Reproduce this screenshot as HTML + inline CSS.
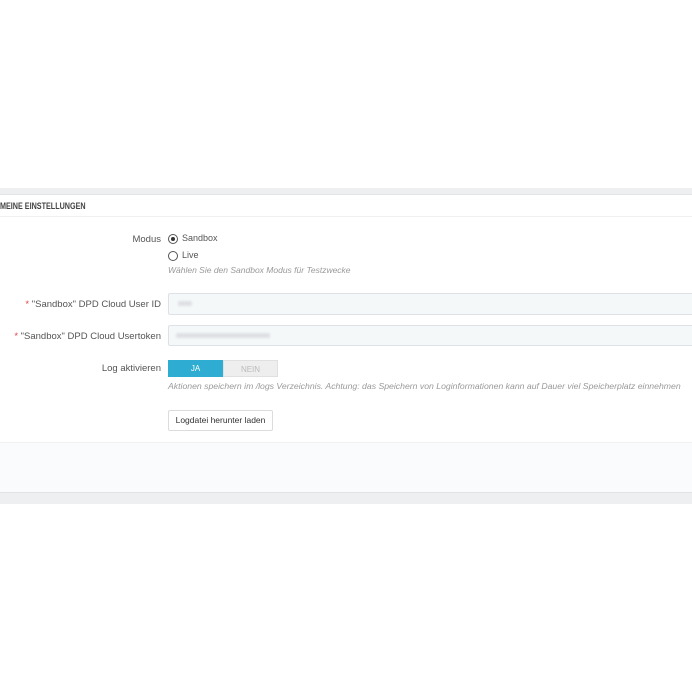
<!DOCTYPE html><html><head><style>
body{margin:0;width:692px;height:692px;background:#fff;font-family:"Liberation Sans",sans-serif;position:relative;overflow:hidden;color:#555}
.a{position:absolute}
.lbl{font-size:9.5px;text-align:right;right:531px;color:#555}
.help{font-size:8.5px;font-style:italic;color:#999;left:168px}
.inp{left:168px;width:530px;height:20px;background:#f5f8f9;border:1px solid #dde2e6;border-radius:2px;box-sizing:border-box}
.star{color:#e0464a}
</style></head><body>
<div class="a" style="left:0;top:188px;width:692px;height:6px;background:#eeeff1"></div>
<div class="a" style="left:0;top:194px;width:692px;height:299px;background:#fff;border-top:1px solid #e2e4e6"></div>
<div class="a" style="left:0;top:201px;font-size:9px;font-weight:bold;color:#444;transform:scaleX(.8);transform-origin:left">MEINE EINSTELLUNGEN</div>
<div class="a" style="left:0;top:216px;width:692px;height:1px;background:#eef0f2"></div>
<div class="a lbl" style="top:234px">Modus</div>
<div class="a" style="left:168px;top:234px;width:8px;height:8px;border:1px solid #555;border-radius:50%"></div>
<div class="a" style="left:171px;top:237px;width:4px;height:4px;background:#333;border-radius:50%"></div>
<div class="a" style="left:182px;top:233px;font-size:9px;color:#555">Sandbox</div>
<div class="a" style="left:168px;top:251px;width:8px;height:8px;border:1px solid #555;border-radius:50%"></div>
<div class="a" style="left:182px;top:250px;font-size:9px;color:#555">Live</div>
<div class="a help" style="top:265px">Wählen Sie den Sandbox Modus für Testzwecke</div>
<div class="a lbl" style="top:299px"><span class="star">*</span> "Sandbox" DPD Cloud User ID</div>
<div class="a inp" style="top:293px;height:22px"></div>
<div class="a" style="left:178px;top:301px;width:14px;height:5px;background:#dde0e3;border-radius:2px;filter:blur(1px)"></div>
<div class="a lbl" style="top:331px"><span class="star">*</span> "Sandbox" DPD Cloud Usertoken</div>
<div class="a inp" style="top:325px;height:21px"></div>
<div class="a" style="left:176px;top:333px;width:94px;height:5px;background:#dde0e3;border-radius:2px;filter:blur(1px)"></div>
<div class="a lbl" style="top:363px">Log aktivieren</div>
<div class="a" style="left:168px;top:360px;width:55px;height:17px;background:#2eacd1;color:#fff;font-size:8px;text-align:center;line-height:17px">JA</div>
<div class="a" style="left:223px;top:360px;width:55px;height:17px;background:#eeeeee;color:#bbb;font-size:8px;text-align:center;line-height:17px;box-sizing:border-box;border:1px solid #e0e0e0">NEIN</div>
<div class="a help" style="top:381px;white-space:nowrap;transform:scaleX(1.02);transform-origin:left">Aktionen speichern im /logs Verzeichnis. Achtung: das Speichern von Loginformationen kann auf Dauer viel Speicherplatz einnehmen</div>
<div class="a" style="left:168px;top:410px;width:105px;height:21px;border:1px solid #dcdcdc;border-radius:2px;box-sizing:border-box;font-size:8.5px;color:#333;text-align:center;line-height:19px">Logdatei herunter laden</div>
<div class="a" style="left:0;top:442px;width:692px;height:50px;background:#fafbfc;border-top:1px solid #eef0f2"></div>
<div class="a" style="left:0;top:492px;width:692px;height:11px;background:#eeeff1;border-top:1px solid #e0e2e4"></div>
</body></html>
